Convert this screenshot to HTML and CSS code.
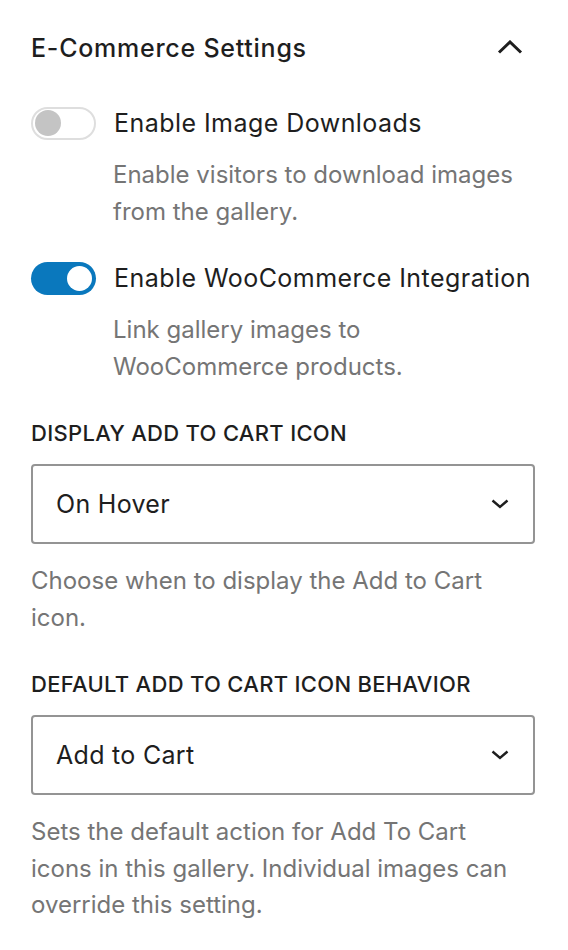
FILE: index.html
```html
<!DOCTYPE html>
<html lang="en">
<head>
<meta charset="utf-8">
<title>E-Commerce Settings</title>
<link rel="stylesheet" href="styles.css">
</head>
<body>
<div class="panel">
  <div class="panel-header">
    <h2 class="panel-title">E-Commerce Settings</h2>
    <svg class="collapse-icon" width="26" height="14" viewBox="0 0 26 14" aria-hidden="true">
      <path d="M2 12.5 L13 2 L24 12.5" fill="none" stroke="#1e1e1e" stroke-width="3"/>
    </svg>
  </div>

  <div class="field">
    <div class="toggle-row">
      <span class="toggle off"><span class="knob"></span></span>
      <span class="toggle-label">Enable Image Downloads</span>
    </div>
    <p class="help indented">Enable visitors to download images from the gallery.</p>
  </div>

  <div class="field field-2">
    <div class="toggle-row">
      <span class="toggle on"><span class="knob"></span></span>
      <span class="toggle-label">Enable WooCommerce Integration</span>
    </div>
    <p class="help indented narrow">Link gallery images to WooCommerce products.</p>
  </div>

  <div class="field field-select">
    <div class="field-label">DISPLAY ADD TO CART ICON</div>
    <div class="select">
      <span class="select-value">On Hover</span>
      <svg class="select-chevron" width="18" height="10" viewBox="0 0 18 10" aria-hidden="true">
        <path d="M1.5 1.5 L9 8 L16.5 1.5" fill="none" stroke="#1e1e1e" stroke-width="2.4"/>
      </svg>
    </div>
    <p class="help help-select">Choose when to display the Add to Cart icon.</p>
  </div>

  <div class="field field-select2">
    <div class="field-label">DEFAULT ADD TO CART ICON BEHAVIOR</div>
    <div class="select">
      <span class="select-value">Add to Cart</span>
      <svg class="select-chevron" width="18" height="10" viewBox="0 0 18 10" aria-hidden="true">
        <path d="M1.5 1.5 L9 8 L16.5 1.5" fill="none" stroke="#1e1e1e" stroke-width="2.4"/>
      </svg>
    </div>
    <p class="help help-select">Sets the default action for Add To Cart icons in this gallery. Individual images can override this setting.</p>
  </div>
</div>
</body>
</html>
```

FILE: styles.css
```css
* { box-sizing: border-box; }

html, body {
  margin: 0;
  padding: 0;
  background: #ffffff;
}

body {
  font-family: Inter, "Noto Sans", "Liberation Sans", sans-serif;
  color: #1e1e1e;
  width: 568px;
}

.panel {
  padding: 32px 33px 24px 31px;
}

.panel-header {
  display: flex;
  align-items: center;
  justify-content: space-between;
  height: 32px;
}

.panel-title {
  margin: 0;
  font-size: 25px;
  font-weight: 500;
  letter-spacing: 0.75px;
  line-height: 32px;
  color: #1e1e1e;
}

.collapse-icon {
  margin-right: 12px;
  margin-top: -2px;
}

.field {
  margin-top: 41px;
}

.field-2 {
  margin-top: 30px;
}

.toggle-row {
  display: flex;
  align-items: center;
  gap: 18px;
  height: 36px;
}

.toggle {
  position: relative;
  flex: none;
  width: 65px;
  height: 33px;
  border-radius: 17px;
  display: flex;
  align-items: center;
}

.toggle.off {
  background: #ffffff;
  border: 2px solid #dedede;
  padding-left: 2px;
}

.toggle.off .knob {
  width: 26px;
  height: 26px;
  border-radius: 50%;
  background: #c4c4c4;
}

.toggle.on {
  background: #0a78bd;
  justify-content: flex-end;
  padding-right: 4px;
}

.toggle.on .knob {
  width: 25px;
  height: 25px;
  border-radius: 50%;
  background: #ffffff;
}

.toggle-label {
  font-size: 25px;
  letter-spacing: 0.45px;
  line-height: 36px;
  color: #1e1e1e;
}

.help {
  margin: 16px 0 0 0;
  font-size: 24px;
  line-height: 36.5px;
  color: #757575;
}

.help.indented {
  margin-left: 82px;
  margin-right: 8px;
}

.help.narrow {
  max-width: 330px;
}

.field-select {
  margin-top: 34px;
}

.field-select2 {
  margin-top: 34px;
}

.field-label {
  font-size: 22px;
  font-weight: 500;
  line-height: 28px;
  color: #1e1e1e;
  letter-spacing: 0.3px;
}

.select {
  margin-top: 17px;
  height: 80px;
  border: 2px solid #949494;
  border-radius: 4px;
  display: flex;
  align-items: center;
  justify-content: space-between;
  padding: 0 24px 0 23px;
}

.select-value {
  font-size: 25px;
  letter-spacing: 0.3px;
  line-height: 32px;
  color: #1e1e1e;
}

.help-select {
  margin-top: 19px;
  max-width: 490px;
}
```
